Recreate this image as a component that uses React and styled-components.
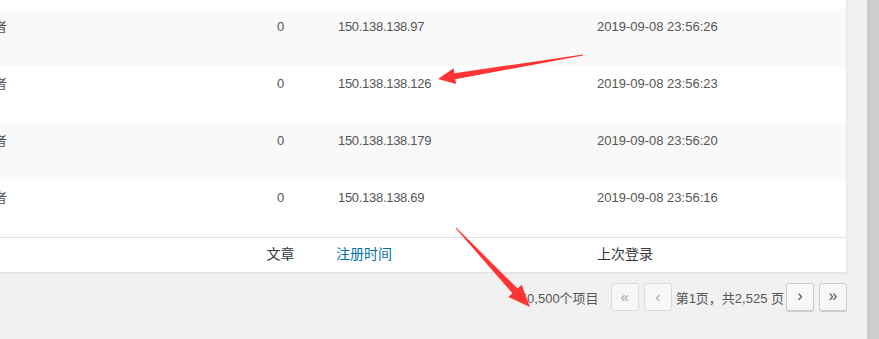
import React from "react";
import styled, { createGlobalStyle } from "styled-components";

const rows = [
    { role: "订阅者", posts: 0, ip: "150.138.138.98", date: "2019-09-08 23:56:29" },
    { role: "订阅者", posts: 0, ip: "150.138.138.97", date: "2019-09-08 23:56:26" },
    { role: "订阅者", posts: 0, ip: "150.138.138.126", date: "2019-09-08 23:56:23" },
    { role: "订阅者", posts: 0, ip: "150.138.138.179", date: "2019-09-08 23:56:20" },
    { role: "订阅者", posts: 0, ip: "150.138.138.69", date: "2019-09-08 23:56:16" },
];

function App() {
    return (
        <>
            <GlobalStyle />
            <Screen>
                <Main>
                    <Card>
                        {rows.map((r, i) => (
                            <Row key={i} $striped={i % 2 === 1}>
                                <RoleCell>{r.role}</RoleCell>
                                <Cell $center>{r.posts}</Cell>
                                <Cell $tight>{r.ip}</Cell>
                                <Cell>{r.date}</Cell>
                            </Row>
                        ))}
                        <FootRow>
                            <HeadCell></HeadCell>
                            <HeadCell $center>文章</HeadCell>
                            <HeadCell $link>注册时间</HeadCell>
                            <HeadCell>上次登录</HeadCell>
                        </FootRow>
                    </Card>
                    <Pagination>
                        <Count>50,500个项目</Count>
                        <PageButton $disabled>«</PageButton>
                        <PageButton $disabled>‹</PageButton>
                        <PageText>第1页，共2,525 页</PageText>
                        <PageButton>›</PageButton>
                        <PageButton>»</PageButton>
                    </Pagination>
                </Main>
                <Scrollbar />
                <Overlay width="879" height="339" viewBox="0 0 879 339">
                    <polygon
                        fill="#ff3535"
                        points="582.9,54.5 454.3,73.2 453.5,68.3 438,79 456.1,84.1 455.3,79.2 583.1,55.5"
                    />
                    <polygon
                        fill="#ff3535"
                        points="455.6,228.3 512.4,293.3 508.4,297.1 530,307 521.6,284.7 517.6,288.5 456.4,227.7"
                    />
                </Overlay>
            </Screen>
        </>
    );
}

export default App;

const GlobalStyle = createGlobalStyle`
    html, body {
        margin: 0;
        padding: 0;
        background: #f1f1f1;
        overflow: hidden;
        font-family: "Liberation Sans", "Noto Sans CJK SC", sans-serif;
        font-size: 13px;
        color: #555;
    }
`;

const Screen = styled.div`
    position: relative;
    display: flex;
    width: 879px;
    height: 339px;
    overflow: hidden;
`;

const Main = styled.div`
    flex: 1;
    min-width: 0;
    padding-right: 20px;
`;

/* the table is cropped on the left and top in the screenshot */
const Card = styled.div`
    margin-left: -43px;
    margin-top: -49px;
    background: #fff;
    border: 1px solid #e5e5e5;
    box-shadow: 0 1px 1px rgba(0, 0, 0, 0.04);
`;

const Row = styled.div`
    display: grid;
    grid-template-columns: 275px 95px 259px 1fr;
    height: 57px;
    background: ${(p) => (p.$striped ? "#f9f9f9" : "#fff")};
`;

const Cell = styled.div`
    padding: 8px 10px;
    line-height: 19.5px;
    font-size: 13px;
    color: #555;
    white-space: nowrap;
    letter-spacing: ${(p) => (p.$tight ? "-0.3px" : "normal")};
    text-align: ${(p) => (p.$center ? "center" : "left")};
`;

const RoleCell = styled(Cell)`
    text-align: right;
    padding-right: 226px;
`;

const FootRow = styled.div`
    display: grid;
    grid-template-columns: 275px 95px 259px 1fr;
    height: 34px;
    border-top: 1px solid #e1e1e1;
    align-items: center;
`;

const HeadCell = styled.div`
    padding: 0 10px 0 ${(p) => (p.$link ? "8px" : "10px")};
    font-size: 14px;
    line-height: 19.6px;
    white-space: nowrap;
    color: ${(p) => (p.$link ? "#0073aa" : "#32373c")};
    text-align: ${(p) => (p.$center ? "center" : "left")};
`;

const Pagination = styled.div`
    display: flex;
    justify-content: flex-end;
    align-items: center;
    margin-top: 10px;
    height: 28px;
`;

const Count = styled.span`
    margin-right: 12px;
    font-size: 13px;
    color: #555;
`;

const PageText = styled.span`
    margin: 0 2px 0 4px;
    font-size: 13px;
    color: #555;
    white-space: nowrap;
`;

const PageButton = styled.span`
    display: inline-flex;
    align-items: center;
    justify-content: center;
    box-sizing: border-box;
    width: 28px;
    height: 28px;
    & + & {
        margin-left: 5px;
    }
    font-size: ${(p) => (p.$disabled ? "15px" : "16px")};
    line-height: 1;
    padding-bottom: 2px;
    border-radius: 3px;
    background: #f7f7f7;
    border: 1px solid ${(p) => (p.$disabled ? "#ddd" : "#ccc")};
    box-shadow: ${(p) => (p.$disabled ? "none" : "0 1px 0 #ccc")};
    color: ${(p) => (p.$disabled ? "#a0a5aa" : "#555")};
`;

const Scrollbar = styled.div`
    width: 12px;
    flex-shrink: 0;
    background: #cdcdcd;
`;

const Overlay = styled.svg`
    position: absolute;
    left: 0;
    top: 0;
    pointer-events: none;
`;
